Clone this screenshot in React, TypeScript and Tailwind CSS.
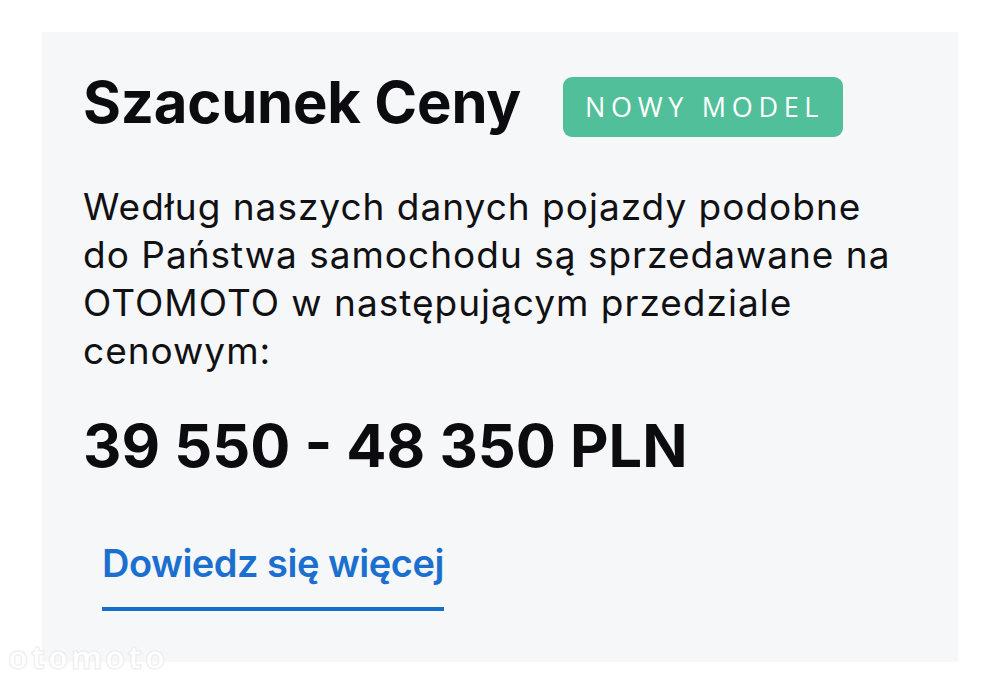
import React from "react";

const sans = '"Inter", "Liberation Sans", Arial, sans-serif';

export default function App() {
  return (
    <div className="relative w-[1000px] h-[683px] bg-white overflow-hidden">
      <div className="mx-[42px] mt-[32px] h-[630px] bg-[#f5f7f9] pl-[41px] pr-[40px] pt-[38px]" style={{ fontFamily: sans }}>
        {/* header row */}
        <div className="flex items-start">
          <h1 className="text-[58px] leading-[64px] font-bold text-[#0b0b10] tracking-[-0.2px]">Szacunek Ceny</h1>
          <span
            className="ml-[42px] mt-[7px] flex h-[60px] w-[280px] items-center rounded-[9px] bg-[#52bf9b] pl-[22px] text-[27px] tracking-[0.21em] text-white"
            style={{ fontFamily: '"Open Sans", "Noto Sans", sans-serif' }}
          >
            NOWY MODEL
          </span>
        </div>

        <p className="mt-[46px] w-[830px] text-[37px] leading-[48px] tracking-[1px] text-[#111114]">
          Według naszych danych pojazdy podobne do Państwa samochodu są sprzedawane na OTOMOTO w następującym przedziale cenowym:
        </p>

        <div className="mt-[35px] text-[59.5px] leading-[70px] font-bold text-[#0b0b10]">39 550 - 48 350 PLN</div>

        <a
          href="#"
          className="ml-[19px] mt-[59px] block w-fit border-b-[4px] border-[#1570cd] pb-[20px] text-[38px] leading-[48px] font-semibold tracking-[-0.5px] text-[#1a6fcf]"
        >
          Dowiedz się więcej
        </a>
      </div>

      {/* watermark */}
      <div
        className="absolute left-[8px] top-[641px] text-[32px] leading-none font-bold tracking-[3px] text-white"
        style={{ fontFamily: '"Noto Sans", sans-serif', WebkitTextStroke: "1px #ececec" }}
      >
        otomoto
      </div>
    </div>
  );
}
